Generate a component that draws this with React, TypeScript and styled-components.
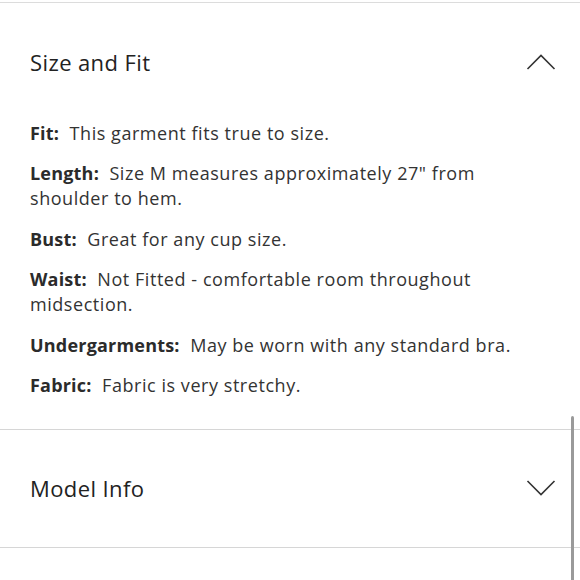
import React from 'react'
import styled, { createGlobalStyle } from 'styled-components'

const GlobalStyle = createGlobalStyle`
  html, body {
    margin: 0;
    padding: 0;
    background: #fff;
  }
  body {
    font-family: "Open Sans", "Liberation Sans", sans-serif;
    color: #2e2e2e;
    -webkit-font-smoothing: antialiased;
  }
`

type Detail = { label: string; text: string }

const details: Detail[] = [
  { label: 'Fit:', text: 'This garment fits true to size.' },
  { label: 'Length:', text: 'Size M measures approximately 27" from shoulder to hem.' },
  { label: 'Bust:', text: 'Great for any cup size.' },
  { label: 'Waist:', text: 'Not Fitted - comfortable room throughout midsection.' },
  { label: 'Undergarments:', text: 'May be worn with any standard bra.' },
  { label: 'Fabric:', text: 'Fabric is very stretchy.' },
]

const Chevron = ({ up }: { up?: boolean }) => (
  <ChevronSvg width="30" height="16" viewBox="0 0 30 16" fill="none">
    {up
      ? <polyline points="1.5,15 15,1.5 28.5,15" stroke="#333" strokeWidth="1.6" />
      : <polyline points="1.5,1 15,14.5 28.5,1" stroke="#333" strokeWidth="1.6" />}
  </ChevronSvg>
)

export default function App() {
  return (
    <Page>
      <GlobalStyle />
      <PrevSection />

      <Section>
        <Header>
          <Title>Size and Fit</Title>
          <Chevron up />
        </Header>
        <Content>
          {details.map((d) => (
            <Line key={d.label}>
              <Label>{d.label}</Label>{'\u00a0 '}{d.text}
            </Line>
          ))}
        </Content>
      </Section>

      <Section>
        <Header>
          <Title>Model Info</Title>
          <Chevron />
        </Header>
      </Section>

      <ScrollThumb />
    </Page>
  )
}

const Page = styled.div`
  position: relative;
  width: 580px;
  height: 580px;
  overflow: hidden;
  background: #fff;
`

const PrevSection = styled.div`
  height: 2px;
  border-bottom: 1px solid #dcdcdc;
`

const Section = styled.section`
  border-bottom: 1px solid #d6d6d6;
`

const Header = styled.div`
  display: flex;
  align-items: center;
  justify-content: space-between;
  height: 117.5px;
  padding: 0 24px 0 30px;
`

const Title = styled.h2`
  margin: 0;
  font-size: 22px;
  font-weight: 500;
  letter-spacing: 0.4px;
  color: #222;
`

const ChevronSvg = styled.svg`
  display: block;
  flex: none;
`

const Content = styled.div`
  padding: 0 40px 15px 30px;
`

const Line = styled.p`
  margin: 0 0 15.5px;
  font-size: 18px;
  line-height: 25px;
  letter-spacing: 0.55px;
  color: #333;
`

const Label = styled.strong`
  font-weight: 700;
  letter-spacing: 0.2px;
  color: #2b2b2b;
`

const ScrollThumb = styled.div`
  position: absolute;
  top: 416px;
  right: 6px;
  width: 3px;
  height: 200px;
  border-radius: 2px;
  background: #9a9a9a;
`
